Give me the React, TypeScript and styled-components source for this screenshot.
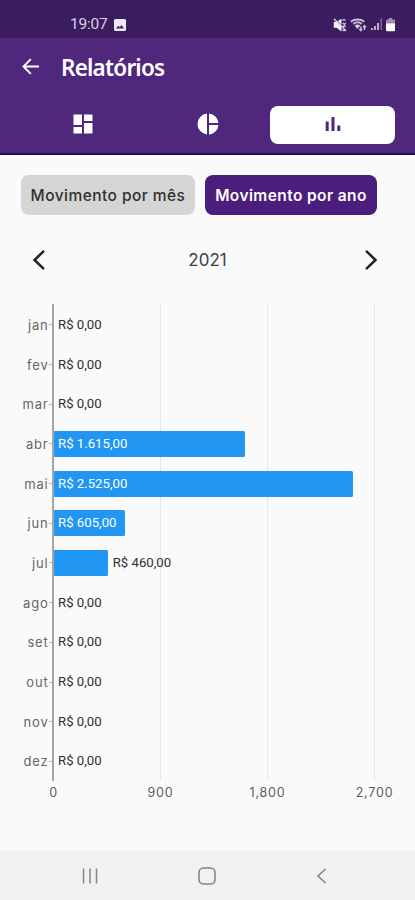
import React from "react";
import styled, { createGlobalStyle } from "styled-components";

const GlobalStyle = createGlobalStyle`
  *, *::before, *::after { box-sizing: border-box; }
  html, body { margin: 0; padding: 0; background: #fafafa; }
  button { border: 0; margin: 0; padding: 0; background: none; font: inherit; color: inherit; }
  svg { display: block; flex: none; }
`;

const PLOT_WIDTH = 321;
const AXIS_MAX = 2700;

const Screen = styled.div`
  width: 415px;
  height: 900px;
  display: flex;
  flex-direction: column;
  overflow: hidden;
  background: #fafafa;
  font-family: Inter, "Liberation Sans", sans-serif;
`;

const StatusBar = styled.div`
  height: 38px;
  padding: 10px 20px 0 70px;
  display: flex;
  justify-content: space-between;
  align-items: flex-start;
  background: #3b1d5f;
  color: #d9d0e4;
`;

const StatusGroup = styled.div<{ $gap: number }>`
  display: flex;
  align-items: center;
  gap: ${(p) => p.$gap}px;
  height: 29px;
`;

const Clock = styled.span`
  font: 400 15.5px/29px Roboto, sans-serif;
  letter-spacing: -0.25px;
  width: 38px;
  white-space: nowrap;
`;

const Header = styled.header`
  height: 117px;
  background: #4f287e;
  border-bottom: 2px solid #220a62;
  color: #fff;
`;

const TitleRow = styled.div`
  height: 60px;
  padding-left: 21px;
  display: flex;
  align-items: center;
`;

const Title = styled.h1`
  margin: 0 0 0 20px;
  font: 600 22.5px/30px "Noto Sans", sans-serif;
  letter-spacing: -0.8px;
`;

const Tabs = styled.nav`
  display: grid;
  grid-template-columns: repeat(3, 125px);
  padding: 8px 20px 0;
`;

const Tab = styled.button<{ $active?: boolean }>`
  height: 37.5px;
  padding-bottom: 2px;
  display: flex;
  align-items: center;
  justify-content: center;
  border-radius: 8px;
  background: ${(p) => (p.$active ? "#fff" : "transparent")};
  color: ${(p) => (p.$active ? "#4f287e" : "#fff")};
`;

const Filters = styled.div`
  display: flex;
  gap: 10px;
  padding: 20px 21px 0;
`;

const Chip = styled.button<{ $active?: boolean; $width: number }>`
  width: ${(p) => p.$width}px;
  height: 40px;
  border-radius: 8px;
  background: ${(p) => (p.$active ? "#4b1d7c" : "#d5d5d5")};
  color: ${(p) => (p.$active ? "#fff" : "#303030")};
  font-size: 15.5px;
  font-weight: ${(p) => (p.$active ? 600 : 500)};
  letter-spacing: ${(p) => (p.$active ? 0.4 : 0.45)}px;
  white-space: nowrap;
`;

const YearNav = styled.div`
  height: 40px;
  margin-top: 25px;
  padding: 0 37px 0 32px;
  display: grid;
  grid-template-columns: 14px 1fr 14px;
  align-items: center;
  color: #222;
`;

const Year = styled.span`
  padding-left: 5px;
  text-align: center;
  font-size: 17px;
  color: #3f3f3f;
`;

const Chart = styled.section`
  display: grid;
  grid-template-columns: 52px ${PLOT_WIDTH + 3}px;
  margin-top: 24px;
`;

const Months = styled.div`
  display: grid;
  grid-template-rows: repeat(12, 39.7px);
  padding-top: 1px;
`;

const Month = styled.div`
  display: flex;
  align-items: center;
  justify-content: flex-end;
  font-size: 13px;
  letter-spacing: 0.8px;
  color: #666;

  &::after {
    content: "";
    width: 3px;
    height: 1px;
    margin-left: 0.5px;
    background: #b5b5b5;
  }
`;

const Plot = styled.div`
  height: 477px;
  display: grid;
  grid-template-rows: repeat(12, 39.7px);
  padding-top: 1px;
  border-left: 2px solid #a6a6a6;
  background:
    linear-gradient(#e8e8e8, #e8e8e8) 106px 0 / 1px 100% no-repeat,
    linear-gradient(#e8e8e8, #e8e8e8) 213px 0 / 1px 100% no-repeat,
    linear-gradient(#e8e8e8, #e8e8e8) 320px 0 / 1px 100% no-repeat;
`;

const PlotRow = styled.div`
  display: flex;
  align-items: center;
`;

const Bar = styled.div`
  height: 26px;
  display: flex;
  align-items: center;
  background: #2196f3;
  border-radius: 0 1.5px 1.5px 0;
`;

const Value = styled.span<{ $inside?: boolean }>`
  padding-left: 4px;
  font: 400 13.2px/20px Roboto, sans-serif;
  color: ${(p) => (p.$inside ? "#fff" : "#303030")};
  white-space: nowrap;

  ${Bar} + & {
    padding-left: 5px;
  }
`;

const Scale = styled.div`
  grid-column: 1 / -1;
  display: grid;
  grid-template-columns: repeat(4, 107px);
  margin-top: 3px;
`;

const Tick = styled.span`
  font-size: 12.5px;
  line-height: 18px;
  letter-spacing: 0.8px;
  text-align: center;
  color: #5c5c5c;
`;

const SystemNav = styled.footer`
  height: 49px;
  margin-top: auto;
  padding: 0 88px 0 82px;
  display: grid;
  grid-template-columns: 16px 1fr 11px;
  justify-items: center;
  align-items: center;
  background: #f1f1f1;
  color: #858585;
`;

const data = [
  { month: "jan", value: 0, label: "R$ 0,00" },
  { month: "fev", value: 0, label: "R$ 0,00" },
  { month: "mar", value: 0, label: "R$ 0,00" },
  { month: "abr", value: 1615, label: "R$ 1.615,00" },
  { month: "mai", value: 2525, label: "R$ 2.525,00" },
  { month: "jun", value: 605, label: "R$ 605,00" },
  { month: "jul", value: 460, label: "R$ 460,00" },
  { month: "ago", value: 0, label: "R$ 0,00" },
  { month: "set", value: 0, label: "R$ 0,00" },
  { month: "out", value: 0, label: "R$ 0,00" },
  { month: "nov", value: 0, label: "R$ 0,00" },
  { month: "dez", value: 0, label: "R$ 0,00" },
];

const PictureIcon = () => (
  <svg width="12" height="12" viewBox="0 0 12 12">
    <path
      fillRule="evenodd"
      fill="#efe9f5"
      d="M1.500 0h9A1.500 1.500 0 0 1 12 1.500v9a1.500 1.500 0 0 1-1.500 1.500h-9A1.500 1.500 0 0 1 0 10.500v-9A1.500 1.500 0 0 1 1.500 0zM2 9.500h8L7.500 6 5.700 8.300 4.300 6.800z"
    />
  </svg>
);

const MuteIcon = () => (
  <svg width="14" height="14" viewBox="0 0 14 14">
    <path fill="#f6f2fa" d="M.8 3.800h2.700L8.500.8v12.700L3.500 9.800H.8z" />
    <path d="M2.200.8 13 11.600" stroke="#3b1d5f" strokeWidth="1" />
    <path
      d="M1 .8 13 12.800M9.500 2.500l1.500-1 1.500 1M9.800 5l1.500 1.500L12.800 5M9.800 9l1.500-1.200L12.800 9M9.500 11.800l1.500 1 1.500-1"
      fill="none"
      stroke="#d9cfe4"
      strokeWidth="1.300"
    />
  </svg>
);

const WifiIcon = () => (
  <svg width="17" height="14" viewBox="0 0 17 14" fill="none" stroke="#c9bcd6">
    <path strokeWidth="1.900" d="M.8 3.700C4.300.7 10.700.7 14.200 3.700M3.300 6c2.500-2 5.900-2 8.400 0" />
    <path fill="#d9cfe4" stroke="none" d="M4.700 7.500c1.700-1.300 3.900-1.300 5.600 0L7.500 11z" />
    <path strokeWidth="1.500" d="M10.800 8.500v4M9.300 11l1.500 1.700 1.400-1.700M14.500 12V7.800M13 9.300l1.500-1.700L16 9.300" />
  </svg>
);

const SignalIcon = () => (
  <svg width="13" height="13" viewBox="0 0 13 13">
    <path fill="#bcaecb" d="M1 10h2v2H1zM4 8h2v4H4zM7 5h2v7H7z" />
    <path fill="#7e6898" d="M10.500 0H12v12h-1.500z" />
  </svg>
);

const BatteryIcon = () => (
  <svg width="9" height="14" viewBox="0 0 9 14">
    <path fill="#a08eb5" d="M2.800 0h3.400v1.500H8a1 1 0 0 1 1 1V6H0V2.500a1 1 0 0 1 1-1h1.800z" />
    <path fill="#fff" d="M0 5.500h9V12a1.200 1.200 0 0 1-1.200 1.200H1.200A1.200 1.200 0 0 1 0 12z" />
  </svg>
);

const BackArrow = () => (
  <svg width="20" height="20" viewBox="0 0 20 20" fill="none" stroke="#fff" strokeWidth="1.900">
    <path d="M18 8.500H3M9.800 1.200 2.500 8.500l7.300 7.300" />
  </svg>
);

const DashboardIcon = () => (
  <svg width="20" height="20" viewBox="0 0 20 20" fill="currentColor">
    <path d="M.5.500h8.500v10.500H.5zM.5 13H9v6.500H.5zM11 .5h8.500V7H11zM11 9h8.500v10.500H11z" />
  </svg>
);

const PieIcon = () => (
  <svg width="22" height="22" viewBox="0 0 22 22" fill="currentColor">
    <path d="M10 .5v21A10.550 10.550 0 0 1 10 .5zM12 .5A10.550 10.550 0 0 1 21.500 10H12zM12 12h9.500A10.550 10.550 0 0 1 12 21.500z" />
  </svg>
);

const BarsIcon = () => (
  <svg width="16" height="16" viewBox="0 0 16 16" fill="currentColor">
    <path d="M.7 5.500h3v9.500h-3zM6.500 1h3v14h-3zM12.300 9.500h3V15h-3z" />
  </svg>
);

const Chevron = ({ right }: { right?: boolean }) => (
  <svg width="14" height="22" viewBox="0 0 14 22" fill="none" stroke="currentColor" strokeWidth="2.500">
    <path d={right ? "M2 1.800 11.500 11 2 20.200" : "M12 1.800 2.500 11l9.500 9.200"} />
  </svg>
);

const RecentsIcon = () => (
  <svg width="16" height="16" viewBox="0 0 16 16" stroke="currentColor" strokeWidth="1.500">
    <path d="M1.500.5v15M8 .5v15M14.500.5v15" />
  </svg>
);

const HomeIcon = () => (
  <svg width="18" height="18" viewBox="0 0 18 18" fill="none" stroke="currentColor" strokeWidth="1.600">
    <rect x="1" y="1" width="16" height="16" rx="4.500" />
  </svg>
);

const SystemBackIcon = () => (
  <svg width="11" height="16" viewBox="0 0 11 16" fill="none" stroke="currentColor" strokeWidth="1.600">
    <path d="M9.500 1 2 8l7.500 7" />
  </svg>
);

export default function App() {
  return (
    <>
      <GlobalStyle />
      <Screen>
        <StatusBar>
          <StatusGroup $gap={6}>
            <Clock>19:07</Clock>
            <PictureIcon />
          </StatusGroup>
          <StatusGroup $gap={3}>
            <MuteIcon />
            <WifiIcon />
            <SignalIcon />
            <BatteryIcon />
          </StatusGroup>
        </StatusBar>
        <Header>
          <TitleRow>
            <BackArrow />
            <Title>Relatórios</Title>
          </TitleRow>
          <Tabs>
            <Tab aria-label="Painel"><DashboardIcon /></Tab>
            <Tab aria-label="Pizza"><PieIcon /></Tab>
            <Tab aria-label="Barras" $active><BarsIcon /></Tab>
          </Tabs>
        </Header>
        <Filters>
          <Chip $width={174}>Movimento por mês</Chip>
          <Chip $width={172} $active>Movimento por ano</Chip>
        </Filters>
        <YearNav>
          <Chevron />
          <Year>2021</Year>
          <Chevron right />
        </YearNav>
        <Chart>
          <Months>
            {data.map((d) => (
              <Month key={d.month}>{d.month}</Month>
            ))}
          </Months>
          <Plot>
            {data.map((d) => {
              const width = (d.value / AXIS_MAX) * PLOT_WIDTH - 1;
              const inside = width > 70;
              return (
                <PlotRow key={d.month}>
                  {d.value > 0 && (
                    <Bar style={{ width }}>{inside && <Value $inside>{d.label}</Value>}</Bar>
                  )}
                  {!inside && <Value>{d.label}</Value>}
                </PlotRow>
              );
            })}
          </Plot>
          <Scale>
            {["0", "900", "1,800", "2,700"].map((t) => (
              <Tick key={t}>{t}</Tick>
            ))}
          </Scale>
        </Chart>
        <SystemNav>
          <RecentsIcon />
          <HomeIcon />
          <SystemBackIcon />
        </SystemNav>
      </Screen>
    </>
  );
}
